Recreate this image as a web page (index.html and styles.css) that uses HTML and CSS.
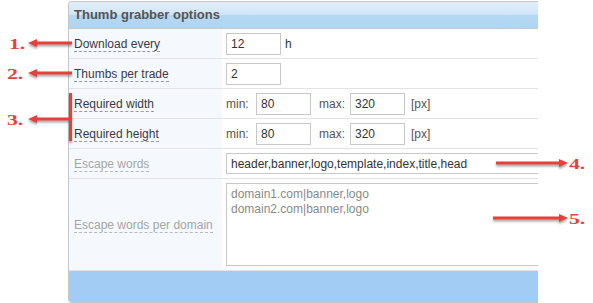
FILE: index.html
```html
<!DOCTYPE html>
<html lang="en">
<head>
  <link rel="stylesheet" href="styles.css">
</head>
<body>
  <div class="page">
    <div class="panel">
      <div class="panel-head">Thumb grabber options</div>
      <table class="options">
        <colgroup>
          <col class="col-label">
          <col>
        </colgroup>
        <tr>
          <th><span class="lbl">Download every</span></th>
          <td><div class="field"><input class="num" type="text" value="12"><span class="unit">h</span></div></td>
        </tr>
        <tr>
          <th><span class="lbl">Thumbs per trade</span></th>
          <td><div class="field"><input class="num" type="text" value="2"></div></td>
        </tr>
        <tr>
          <th><span class="lbl">Required width</span></th>
          <td>
            <div class="field">
              <span class="pre">min:</span><input class="num" type="text" value="80">
              <span class="pre pre-max">max:</span><input class="num" type="text" value="320">
              <span class="px">[px]</span>
            </div>
          </td>
        </tr>
        <tr>
          <th><span class="lbl">Required height</span></th>
          <td>
            <div class="field">
              <span class="pre">min:</span><input class="num" type="text" value="80">
              <span class="pre pre-max">max:</span><input class="num" type="text" value="320">
              <span class="px">[px]</span>
            </div>
          </td>
        </tr>
        <tr>
          <th class="off"><span class="lbl">Escape words</span></th>
          <td><div class="field"><input class="wide" type="text" value="header,banner,logo,template,index,title,head"></div></td>
        </tr>
        <tr class="tall">
          <th class="off"><span class="lbl">Escape words per domain</span></th>
          <td><textarea class="area">domain1.com|banner,logo
domain2.com|banner,logo</textarea></td>
        </tr>
      </table>
      <div class="panel-foot"></div>
    </div>

    <!-- annotation marks over the screenshot -->
    <svg class="marks" width="593" height="303" viewBox="0 0 593 303">
      <g class="arrows">
        <rect x="36" y="41.5" width="36" height="3"/>
        <polygon points="28,43 37,39 37,47"/>
        <rect x="36" y="71.5" width="36" height="3"/>
        <polygon points="28,73 37,69 37,77"/>
        <rect x="36" y="117.5" width="34" height="3"/>
        <polygon points="28,119 37,115 37,123"/>
        <rect x="69" y="93" width="3" height="48"/>
        <rect x="496" y="161.5" width="64" height="3"/>
        <polygon points="568,163 559,159 559,167"/>
        <rect x="493" y="216.5" width="67" height="3"/>
        <polygon points="568,218 559,214 559,222"/>
      </g>
      <g class="nums">
        <text transform="translate(9 49) scale(1.45 1)">1.</text>
        <text transform="translate(7 79) scale(1.45 1)">2.</text>
        <text transform="translate(7 125) scale(1.45 1)">3.</text>
        <text transform="translate(569 169) scale(1.45 1)">4.</text>
        <text transform="translate(569 224) scale(1.45 1)">5.</text>
      </g>
    </svg>
  </div>
</body>
</html>
```

FILE: styles.css
```css
body {
  margin: 0;
  background: #fff;
  font-family: "Liberation Sans", Arial, sans-serif;
  font-size: 12px;
  color: #333;
}
.page {
  position: relative;
  width: 593px;
  height: 303px;
  overflow: hidden;
}
.panel {
  margin: 1px 0 0 68px;
  width: 469px;
  border: 1px solid #c6c6c6;
  border-right: none;
  border-radius: 4px 0 0 4px;
  overflow: hidden;
}
.panel-head {
  height: 26px;
  line-height: 25px;
  padding-left: 5px;
  font-size: 13px;
  font-weight: bold;
  color: #555;
  background: linear-gradient(#e0eefa, #d2e6f8 46%, #b5d8f3 52%, #b0d5f2);
  border-bottom: 1px solid #c9c9c9;
}
.options {
  width: 469px;
  table-layout: fixed;
  border-collapse: collapse;
}
.col-label {
  width: 153px;
}
.options th,
.options td {
  height: 29px;
  padding: 0;
  border-bottom: 1px solid #e3e3e3;
  overflow: hidden;
}
.options th {
  padding-left: 5px;
  text-align: left;
  font-weight: normal;
  white-space: nowrap;
  background: #f5f9fd;
}
.options td {
  padding-left: 4px;
}
.options .tall th,
.options .tall td {
  height: 91px;
}
.lbl {
  color: #3a3a46;
  border-bottom: 1px dashed #9a9a9a;
}
.off .lbl {
  color: #a5a5a5;
  border-bottom-color: #b8b8b8;
}
.field {
  display: flex;
  align-items: center;
  white-space: nowrap;
}
.num,
.wide,
.area {
  box-sizing: border-box;
  flex: none;
  border: 1px solid #c8c8c8;
  font-family: "Liberation Sans", Arial, sans-serif;
  font-size: 12px;
  color: #333;
  background: #fff;
  outline: none;
}
.num {
  width: 55px;
  height: 22px;
  padding: 0 4px;
}
.wide {
  width: 330px;
  height: 21px;
  padding: 0 4px;
}
.unit {
  margin-left: 4px;
}
.pre {
  flex: none;
  width: 30px;
  color: #555;
}
.pre-max {
  width: 31px;
  margin-left: 8px;
}
.px {
  margin-left: 6px;
  color: #555;
}
.area {
  display: block;
  width: 330px;
  height: 83px;
  padding: 3px 4px;
  line-height: 15px;
  color: #8a8a8a;
  resize: none;
  overflow: hidden;
}
.panel-foot {
  height: 31px;
  background: #a2ccf4;
}
.marks {
  position: absolute;
  left: 0;
  top: 0;
}
.arrows {
  fill: #e5403a;
  filter: drop-shadow(0 2px 1px rgba(0, 0, 0, 0.35));
}
.nums {
  fill: #e5403a;
  font-family: "Liberation Serif", "Times New Roman", serif;
  font-size: 15px;
  font-weight: bold;
}
```
